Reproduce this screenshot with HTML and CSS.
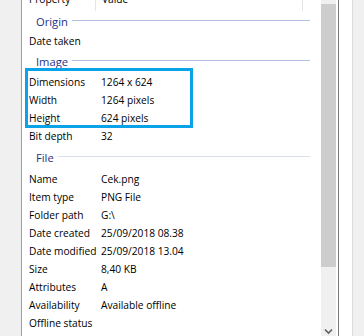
FILE: index.html
```html
<html lang="en">
	<head>
		<meta charset="utf-8" />
		<title>Cek.png Properties - Details</title>
		<link rel="stylesheet" href="styles.css">
	</head>
	<body>
		<div id="window">
			<div class="gutter"></div>

			<div class="list">
				<div class="list-body">
					<div class="header">
						<div class="col-name"><span>Property</span></div>
						<div class="col-value"><span>Value</span></div>
					</div>

					<div class="group group-origin"><span>Origin</span><i></i></div>
					<div class="row"><div class="col-name">Date taken</div><div class="col-value"></div></div>

					<div class="group group-image"><span>Image</span><i></i></div>
					<div class="row"><div class="col-name">Dimensions</div><div class="col-value">1264 x 624</div></div>
					<div class="row"><div class="col-name">Width</div><div class="col-value">1264 pixels</div></div>
					<div class="row"><div class="col-name">Height</div><div class="col-value">624 pixels</div></div>
					<div class="row"><div class="col-name">Bit depth</div><div class="col-value">32</div></div>

					<div class="group group-file"><span>File</span><i></i></div>
					<div class="row"><div class="col-name">Name</div><div class="col-value">Cek.png</div></div>
					<div class="row"><div class="col-name">Item type</div><div class="col-value">PNG File</div></div>
					<div class="row"><div class="col-name">Folder path</div><div class="col-value">G:\</div></div>
					<div class="row"><div class="col-name">Date created</div><div class="col-value">25/09/2018 08.38</div></div>
					<div class="row"><div class="col-name">Date modified</div><div class="col-value">25/09/2018 13.04</div></div>
					<div class="row"><div class="col-name">Size</div><div class="col-value">8,40 KB</div></div>
					<div class="row"><div class="col-name">Attributes</div><div class="col-value">A</div></div>
					<div class="row"><div class="col-name">Availability</div><div class="col-value">Available offline</div></div>
					<div class="row"><div class="col-name">Offline status</div><div class="col-value"></div></div>
				</div>

				<div class="scrollbar">
					<div class="track"><div class="thumb"></div></div>
					<div class="arrow">
						<svg width="15" height="17" viewBox="0 0 15 17"><polyline points="4,8.5 7.5,12 11,8.5" fill="none" stroke="#606060" stroke-width="1.6" /></svg>
					</div>
				</div>
			</div>

			<div class="page-edge"></div>

			<!-- annotation box drawn over the image group -->
			<div class="highlight"></div>
		</div>
	</body>
</html>
```

FILE: styles.css
```css
body
{
	background: #f0f0f0;
	margin: 0;
	padding: 0;
	color: #000000;
	font-family: "Open Sans", "Noto Sans", sans-serif;
	font-size: 10.2px;
	overflow: hidden;
}

div#window
{
	position: relative;
	display: flex;
	height: 336px;
	overflow: hidden;
}

div.gutter
{
	width: 21px;
	flex: none;
}

div.list
{
	display: flex;
	width: 316px;
	flex: none;
	background: #ffffff;
	border-left: 1px solid #a0a0a0;
	border-right: 1px solid #7a7a7a;
}

div.list-body
{
	width: 299px;
	flex: none;
}

div.header
{
	display: flex;
	height: 11px;
	overflow: hidden;
}

div.header span
{
	display: block;
	margin-top: -10px;
	line-height: 18px;
}

div.header div.col-name
{
	border-right: 1px solid #e5e5e5;
}

div.row
{
	display: flex;
	height: 18px;
	line-height: 18px;
	white-space: nowrap;
}

.col-name
{
	width: 66px;
	padding-left: 7px;
	flex: none;
}

.col-value
{
	width: 200px;
	padding-left: 6px;
	flex: none;
	border-right: 1px solid transparent;
}

div.header div.col-value
{
	border-right: 1px solid #e5e5e5;
}

div.group
{
	display: flex;
	align-items: center;
	gap: 4px;
	height: 23px;
	padding: 0 11px 0 14px;
	color: #1e3287;
	font-size: 11.2px;
}

div.group i
{
	flex: 1;
	height: 1px;
	margin-top: -2px;
	background: #b4c3e3;
}

div.group-origin
{
	height: 21px;
}

div.group-file
{
	height: 25px;
}

div.group-file i
{
	background: #d9deef;
}

div.scrollbar
{
	display: flex;
	flex-direction: column;
	width: 15px;
	margin-right: 2px;
	background: #f0f0f0;
}

div.track
{
	flex: 1;
	padding-top: 4px;
}

div.thumb
{
	height: 263px;
	background: #cdcdcd;
}

div.arrow
{
	height: 17px;
	margin-bottom: -2px;
}

div.arrow svg
{
	display: block;
}

div.page-edge
{
	width: 13px;
	flex: none;
	background: #ffffff;
	border-right: 1px solid #dcdcdc;
}

div.highlight
{
	position: absolute;
	left: 25px;
	top: 68px;
	width: 162px;
	height: 54px;
	border: 3px solid #0aa2e8;
}
```
